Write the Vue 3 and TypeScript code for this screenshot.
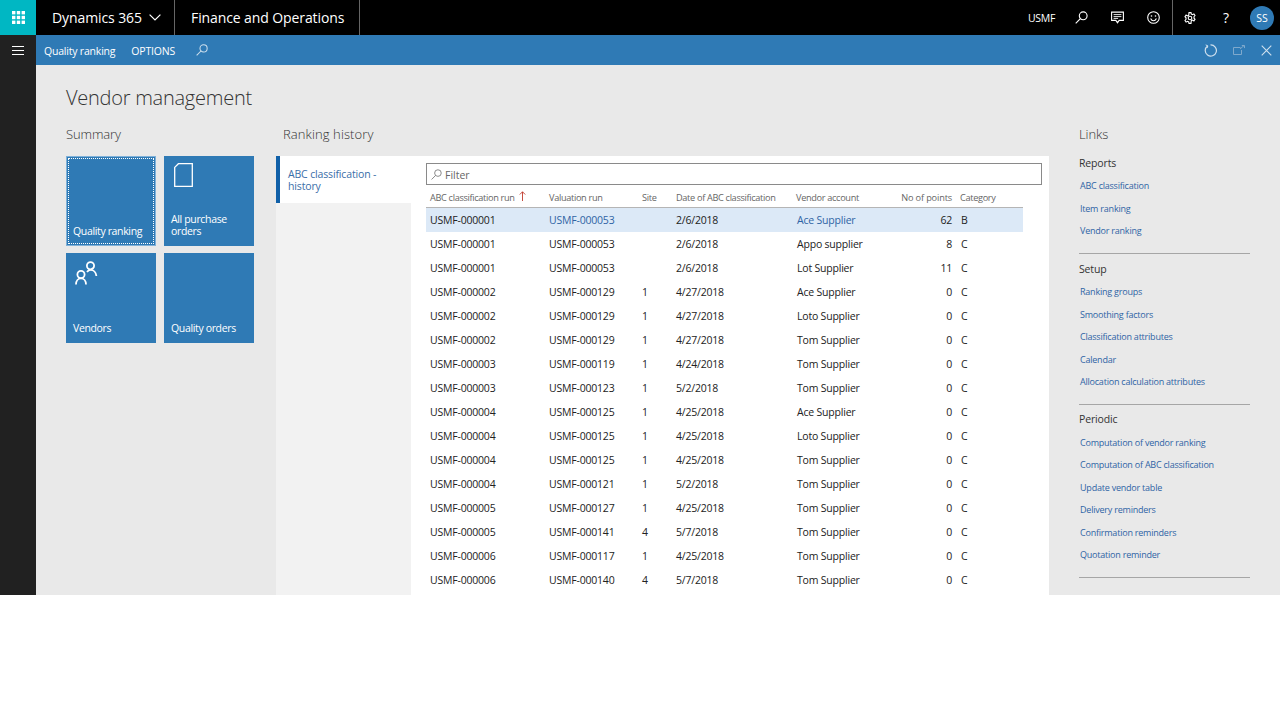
<script setup lang="ts">
interface Row { run: string; val: string; site: string; date: string; vendor: string; pts: string; cat: string; sel?: boolean }
const raw: string[] = [
  '000001|000053||2/6/2018|Ace Supplier|62|B',
  '000001|000053||2/6/2018|Appo supplier|8|C',
  '000001|000053||2/6/2018|Lot Supplier|11|C',
  '000002|000129|1|4/27/2018|Ace Supplier|0|C',
  '000002|000129|1|4/27/2018|Loto Supplier|0|C',
  '000002|000129|1|4/27/2018|Tom Supplier|0|C',
  '000003|000119|1|4/24/2018|Tom Supplier|0|C',
  '000003|000123|1|5/2/2018|Tom Supplier|0|C',
  '000004|000125|1|4/25/2018|Ace Supplier|0|C',
  '000004|000125|1|4/25/2018|Loto Supplier|0|C',
  '000004|000125|1|4/25/2018|Tom Supplier|0|C',
  '000004|000121|1|5/2/2018|Tom Supplier|0|C',
  '000005|000127|1|4/25/2018|Tom Supplier|0|C',
  '000005|000141|4|5/7/2018|Tom Supplier|0|C',
  '000006|000117|1|4/25/2018|Tom Supplier|0|C',
  '000006|000140|4|5/7/2018|Tom Supplier|0|C',
]
const rows: Row[] = raw.map((l, i) => {
  const [a, b, site, date, vendor, pts, cat] = l.split('|')
  return { run: 'USMF-' + a, val: 'USMF-' + b, site, date, vendor, pts, cat, sel: i === 0 }
})
const linkGroups = [
  { title: 'Reports', items: ['ABC classification', 'Item ranking', 'Vendor ranking'] },
  { title: 'Setup', items: ['Ranking groups', 'Smoothing factors', 'Classification attributes', 'Calendar', 'Allocation calculation attributes'] },
  { title: 'Periodic', items: ['Computation of vendor ranking', 'Computation of ABC classification', 'Update vendor table', 'Delivery reminders', 'Confirmation reminders', 'Quotation reminder'] },
]
</script>

<template>
  <div class="app">
    <header class="topbar">
      <div class="waffle">
        <svg width="13" height="13" viewBox="0 0 13 13" fill="#fff">
          <rect x="0" y="0" width="3.4" height="3.4" /><rect x="4.8" y="0" width="3.4" height="3.4" /><rect x="9.6" y="0" width="3.4" height="3.4" />
          <rect x="0" y="4.8" width="3.4" height="3.4" /><rect x="4.8" y="4.8" width="3.4" height="3.4" /><rect x="9.6" y="4.8" width="3.4" height="3.4" />
          <rect x="0" y="9.6" width="3.4" height="3.4" /><rect x="4.8" y="9.6" width="3.4" height="3.4" /><rect x="9.6" y="9.6" width="3.4" height="3.4" />
        </svg>
      </div>
      <div class="brand">
        <span>Dynamics 365</span>
        <svg width="12" height="7" viewBox="0 0 12 7" fill="none" stroke="#fff" stroke-width="1.2"><path d="M.6.6 6 6l5.4-5.4" /></svg>
      </div>
      <div class="product">Finance and Operations</div>
      <div class="top-right">
        <span class="company">USMF</span>
        <span class="ti ti-search">
          <svg width="13" height="13" viewBox="0 0 13 13" fill="none" stroke="#fff" stroke-width="1.1"><circle cx="8.2" cy="4.8" r="3.9" /><path d="M5.4 7.6.7 12.4" /></svg>
        </span>
        <span class="ti ti-msg">
          <svg width="13" height="13" viewBox="0 0 13 13" fill="none" stroke="#fff" stroke-width="1.1"><path d="M.6 1.1h11.8v8.3H8.2L6.5 11.7 4.8 9.4H.6z" /><path d="M2.6 3.6h7.8M2.6 5.6h7.8M2.6 7.4h4.5" stroke-width=".9" /></svg>
        </span>
        <span class="ti ti-smile">
          <svg width="13" height="13" viewBox="0 0 13 13" fill="none" stroke="#fff" stroke-width="1.1"><circle cx="6.5" cy="6.5" r="5.8" /><circle cx="4.5" cy="5" r=".8" fill="#fff" stroke="none" /><circle cx="8.5" cy="5" r=".8" fill="#fff" stroke="none" /><path d="M3.6 7.6c.7 1.5 1.7 2.2 2.9 2.2s2.2-.7 2.9-2.2" /></svg>
        </span>
        <span class="top-div"></span>
        <span class="ti ti-gear">
          <svg width="12" height="12" viewBox="0 0 12 12" fill="none" stroke="#fff" stroke-width="1.1"><circle cx="6" cy="6" r="1.8" /><path d="M5 .6h2l.3 1.5 1.3.6 1.3-.8 1.1 1.6-1 1.1v1.6l1 1.1-1.1 1.6-1.3-.8-1.3.6L7 11.4H5l-.3-1.5-1.3-.6-1.3.8L1 8.5l1-1.1V5.8l-1-1.1 1.1-1.6 1.3.8 1.3-.6z" /></svg>
        </span>
        <span class="ti ti-help">?</span>
        <span class="avatar">SS</span>
      </div>
    </header>

    <nav class="cmdbar">
      <button class="hamb" aria-label="Menu"><i></i><i></i><i></i></button>
      <span class="cmd-title">Quality ranking</span>
      <span class="cmd-opt">OPTIONS</span>
      <svg class="cmd-search" width="12" height="12" viewBox="0 0 13 13" fill="none" stroke="#cfe0ee" stroke-width="1.1"><circle cx="8.2" cy="4.8" r="3.9" /><path d="M5.4 7.6.7 12.4" /></svg>
      <div class="cmd-right">
        <svg width="13" height="13" viewBox="0 0 13 13" fill="none" stroke="#cfe0ee" stroke-width="1.2"><path d="M3.6 1.9A5.6 5.6 0 1 0 6.5.9" /><path d="M1.7.9l2.2 1 -.9 2.2" stroke-width="1" /></svg>
        <svg width="12" height="10" viewBox="0 0 12 10" fill="none" stroke="#7fa9cc" stroke-width="1"><path d="M7.5 2.5H.5v7h8V5" /><path d="M7 4l4-3.4M8.8.5h2.7v2.6" /></svg>
        <svg width="11" height="11" viewBox="0 0 11 11" fill="none" stroke="#cfe0ee" stroke-width="1.1"><path d="M.7.7l9.6 9.6M10.3.7.7 10.3" /></svg>
      </div>
    </nav>

    <div class="body">
      <aside class="rail"></aside>
      <main class="content">
        <h1 class="page-title">Vendor management</h1>
        <div class="columns">
          <section class="summary">
            <h2 class="sec">Summary</h2>
            <div class="tiles">
              <div class="tile focus"><span class="tile-label">Quality ranking</span></div>
              <div class="tile">
                <svg class="tile-icon doc" width="19" height="24" viewBox="0 0 19 24" fill="none" stroke="#fff" stroke-width="1.3"><path d="M4.400.7h13.900v22.600H.7V4.400z" /></svg>
                <span class="tile-label">All purchase orders</span>
              </div>
              <div class="tile">
                <svg class="tile-icon ppl" width="23" height="24" viewBox="0 0 23 24" fill="none" stroke="#fff" stroke-width="1.8"><circle cx="15.500" cy="4.700" r="3.600" /><path d="M12 11c1-1.400 2.200-2.100 3.500-2.100 3 0 5.500 2.500 5.900 6.100" /><circle cx="6" cy="13.500" r="3.600" /><path d="M1 23.500c0-3.800 2.200-6.100 5-6.100s5 2.300 5 6.100" /></svg>
                <span class="tile-label">Vendors</span>
              </div>
              <div class="tile"><span class="tile-label">Quality orders</span></div>
            </div>
          </section>

          <section class="history">
            <h2 class="sec sec-h">Ranking history</h2>
            <div class="panel">
              <div class="tabs">
                <div class="tab">ABC classification - history</div>
              </div>
              <div class="grid-wrap">
                <div class="filter">
                  <svg width="11" height="11" viewBox="0 0 13 13" fill="none" stroke="#777" stroke-width="1"><circle cx="8.2" cy="4.8" r="3.9" /><path d="M5.4 7.6.7 12.4" /></svg>
                  <span>Filter</span>
                </div>
                <div class="table">
                  <div class="tr head">
                    <div class="c c1">ABC classification run <svg class="sort" width="7" height="10" viewBox="0 0 7 10" fill="none" stroke="#c0392b" stroke-width=".9"><path d="M3.500 10V.8M.8 3.500 3.500.8l2.700 2.700" /></svg></div>
                    <div class="c c2">Valuation run</div>
                    <div class="c c3">Site</div>
                    <div class="c c4">Date of ABC classification</div>
                    <div class="c c5">Vendor account</div>
                    <div class="c c6">No of points</div>
                    <div class="c c7">Category</div>
                  </div>
                  <div v-for="(r, i) in rows" :key="i" class="tr" :class="{ sel: r.sel }">
                    <div class="c c1">{{ r.run }}</div>
                    <div class="c c2" :class="{ lnk: r.sel }">{{ r.val }}</div>
                    <div class="c c3">{{ r.site }}</div>
                    <div class="c c4">{{ r.date }}</div>
                    <div class="c c5" :class="{ lnk: r.sel }">{{ r.vendor }}</div>
                    <div class="c c6">{{ r.pts }}</div>
                    <div class="c c7">{{ r.cat }}</div>
                  </div>
                </div>
              </div>
            </div>
          </section>

          <section class="links">
            <h2 class="sec">Links</h2>
            <div v-for="g in linkGroups" :key="g.title" class="group">
              <h3 class="group-title">{{ g.title }}</h3>
              <a v-for="it in g.items" :key="it" class="link">{{ it }}</a>
            </div>
          </section>
        </div>
      </main>
    </div>
  </div>
</template>

<style scoped>
.app {
  width: 1280px;
  height: 595px;
  overflow: hidden;
  font-family: "Open Sans", "Noto Sans", "Liberation Sans", sans-serif;
  background: #e9e9e9;
  display: flex;
  flex-direction: column;
}
.topbar {
  height: 35px;
  flex: none;
  background: #000;
  color: #fff;
  display: flex;
  align-items: stretch;
}
.waffle {
  width: 36px;
  background: #00b7c3;
  display: flex;
  align-items: center;
  justify-content: center;
}
.brand {
  width: 139px;
  box-sizing: border-box;
  padding-left: 16px;
  display: flex;
  align-items: center;
  gap: 7px;
  font-size: 14px;
  letter-spacing: -.1px;
  border-right: 1px solid #666;
}
.product {
  width: 185px;
  box-sizing: border-box;
  padding-left: 16px;
  display: flex;
  align-items: center;
  font-size: 14px;
  letter-spacing: -.1px;
  border-right: 1px solid #666;
}
.top-right {
  margin-left: auto;
  display: flex;
  align-items: center;
  padding-right: 6px;
}
.company {
  font-size: 10.5px;
  letter-spacing: -.3px;
  margin-right: 19px;
}
.ti {
  width: 36px;
  display: flex;
  justify-content: center;
  align-items: center;
}
.ti-search { width: 15px; margin-right: 21px; }
.ti-msg { width: 15px; margin-right: 21px; }
.ti-smile { width: 15px; }
.top-div {
  width: 1px;
  height: 35px;
  background: #666;
  margin: 0 11px;
}
.ti-gear { width: 14px; margin-left: -1px; margin-right: 23px; }
.ti-help { width: 12px; font-size: 14px; margin-right: 18px; }
.avatar {
  width: 24px;
  height: 24px;
  border-radius: 50%;
  background: #2f7ab5;
  font-size: 10.5px;
  display: flex;
  align-items: center;
  justify-content: center;
}
.cmdbar {
  height: 30px;
  flex: none;
  background: #2f7ab5;
  color: #fff;
  display: flex;
  align-items: center;
}
.hamb {
  width: 36px;
  height: 30px;
  flex: none;
  background: #212121;
  border: 0;
  padding: 0;
  display: flex;
  flex-direction: column;
  align-items: center;
  justify-content: center;
  gap: 3px;
}
.hamb i {
  display: block;
  width: 12px;
  height: 1px;
  background: #fff;
}
.cmd-title {
  margin-left: 8px;
  padding-top: 1px;
  font-size: 10.5px;
  letter-spacing: -.2px;
}
.cmd-opt {
  margin-left: 16px;
  padding-top: 1px;
  font-size: 10.5px;
  letter-spacing: -.2px;
}
.cmd-search { margin-left: 21px; }
.cmd-right {
  margin-left: auto;
  display: flex;
  align-items: center;
  gap: 16px;
  padding-right: 8px;
}
.body {
  flex: 1;
  display: flex;
  min-height: 0;
}
.rail {
  width: 36px;
  flex: none;
  background: #212121;
}
.content {
  flex: 1;
  min-width: 0;
  padding: 0 0 0 30px;
}
.page-title {
  margin: 0;
  padding-top: 18px;
  height: 51px;
  box-sizing: border-box;
  font-size: 20px;
  line-height: 30px;
  font-weight: 300;
  color: #333;
  letter-spacing: -.25px;
}
.columns {
  display: flex;
  margin-top: 8px;
}
.sec {
  margin: 0;
  height: 32px;
  font-size: 13px;
  line-height: 20px;
  font-weight: 300;
  color: #333;
  letter-spacing: -.1px;
}
.sec-h { padding-left: 7px; letter-spacing: .1px; }
.summary { width: 210px; flex: none; }
.tiles {
  display: grid;
  grid-template-columns: 90px 90px;
  grid-auto-rows: 90px;
  column-gap: 8px;
  row-gap: 7px;
}
.tile {
  position: relative;
  background: #2f7ab5;
  color: #fff;
  display: flex;
  flex-direction: column;
  justify-content: flex-end;
  padding: 0 7px 9px 7px;
  box-sizing: border-box;
}
.tile-label {
  font-size: 10.500px;
  line-height: 12px;
  letter-spacing: -.35px;
}
.tile-icon { position: absolute; }
.doc { left: 10px; top: 7px; }
.ppl { left: 9px; top: 8px; }
.focus {
  outline: 1px solid #7fb0d8;
  outline-offset: -1px;
}
.focus::after {
  content: "";
  position: absolute;
  inset: 2px;
  border: 1px dotted #fff;
}
.history { width: 773px; flex: none; }
.panel {
  display: flex;
  height: 439px;
  background: #fff;
}
.tabs {
  width: 135px;
  flex: none;
  background: #f2f2f2;
}
.tab {
  height: 47px;
  box-sizing: border-box;
  background: #fff;
  border-left: 4px solid #1060a8;
  padding: 12px 20px 0 8px;
  font-size: 10.500px;
  line-height: 12px;
  color: #3a6ea8;
  letter-spacing: -.15px;
}
.grid-wrap {
  flex: 1;
  padding: 7px 7px 0 15px;
  min-width: 0;
}
.filter {
  height: 22px;
  box-sizing: border-box;
  border: 1px solid #8a8a8a;
  display: flex;
  align-items: center;
  gap: 3px;
  padding-left: 4px;
  font-size: 10.500px;
  color: #666;
}
.filter span { padding-top: 1px; }
.table { width: 597px; }
.tr {
  display: grid;
  grid-template-columns: 123px 93px 34px 120px 118px 38px 1fr;
  height: 24px;
  align-items: center;
  font-size: 10.500px;
  color: #222;
  letter-spacing: -.2px;
}
.tr.sel { background: #dce9f7; }
.head {
  height: 23px;
  padding-top: 2px;
  font-size: 9.200px;
  color: #666;
  border-bottom: 1px solid #b5b5b5;
  box-sizing: border-box;
  letter-spacing: -.33px;
}
.c {
  white-space: nowrap;
  overflow: visible;
}
.c1 { padding-left: 4px; }
.c5 { padding-left: 1px; }
.c6 { text-align: right; direction: rtl; }
.head .c5 { padding-left: 0; }
.head .c6 { letter-spacing: -.15px; }
.c7 { padding-left: 9px; }
.head .c7 { padding-left: 8px; }
.sort { margin-left: 2px; vertical-align: 0; }
.lnk { color: #2f64a5; }
.links {
  margin-left: 30px;
  width: 171px;
  flex: none;
}
.links .sec { height: 31px; }
.group {
  display: flex;
  flex-direction: column;
  box-sizing: border-box;
  border-bottom: 1px solid #a6a6a6;
  padding-top: 7px;
}
.group:nth-of-type(1) { height: 99px; padding-top: 0; }
.group:nth-of-type(2) { height: 151px; }
.group:nth-of-type(3) { height: 173px; padding-top: 6px; }
.group:nth-of-type(3) .group-title { height: 20.500px; }
.group-title {
  margin: 0;
  padding-top: 1px;
  height: 20px;
  box-sizing: border-box;
  font-size: 10.500px;
  line-height: 14px;
  font-weight: 400;
  color: #333;
  letter-spacing: -.15px;
}
.link {
  flex: none;
  height: 22.500px;
  line-height: 22.500px;
  font-size: 9px;
  color: #2f64a5;
  padding-left: 1px;
  letter-spacing: -.22px;
  white-space: nowrap;
}
</style>

<style>
html, body { background: #fff; }
</style>
